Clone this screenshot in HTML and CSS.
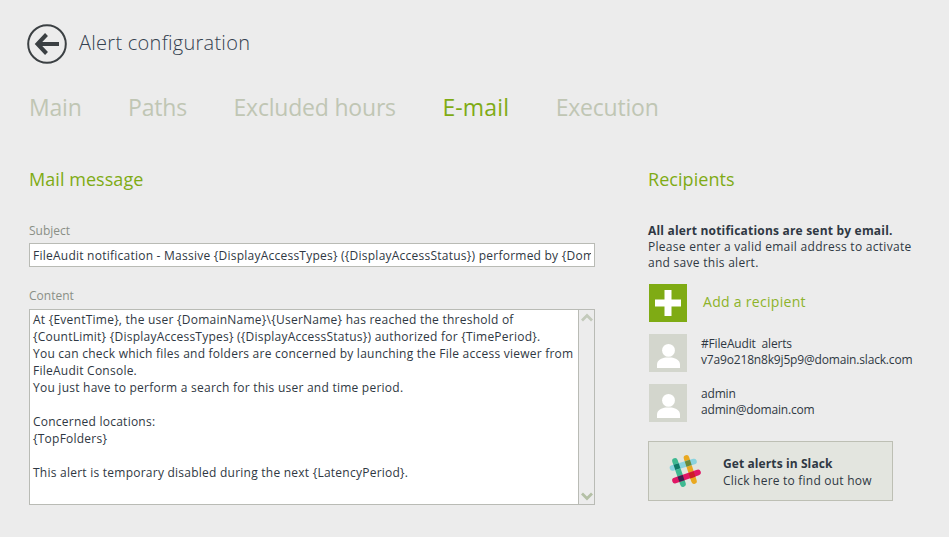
FILE: index.html
```html
<!DOCTYPE html>
<html lang="en">
<head>
  <meta charset="UTF-8">
  <meta name="viewport" content="width=device-width, initial-scale=1.0">
  <title>Alert configuration</title>
  <link rel="stylesheet" href="styles.css">
</head>
<body>
  <header class="page-header">
    <svg class="back-icon" width="40" height="40" viewBox="0 0 40 40">
      <circle cx="20" cy="20" r="18.8" fill="none" stroke="#3b4043" stroke-width="2"/>
      <path d="M19.5 10.5 L10.5 20 L19.5 29.5 M11 20 H32" fill="none" stroke="#3b4043" stroke-width="4"/>
    </svg>
    <h1>Alert configuration</h1>
  </header>

  <nav class="tabs">
    <a class="tab">Main</a>
    <a class="tab">Paths</a>
    <a class="tab">Excluded hours</a>
    <a class="tab active">E-mail</a>
    <a class="tab">Execution</a>
  </nav>

  <main class="columns">
    <section class="message">
      <h2>Mail message</h2>
      <label class="field-label subject-label" for="subject">Subject</label>
      <input class="subject-input" type="text" id="subject" value="FileAudit notification - Massive {DisplayAccessTypes} ({DisplayAccessStatus}) performed by {DomainName}\{UserName}">
      <div class="field-label content-label">Content</div>
      <div class="content-box">
        <div class="content-text">At {EventTime}, the user {DomainName}\{UserName} has reached the threshold of
{CountLimit} {DisplayAccessTypes} ({DisplayAccessStatus}) authorized for {TimePeriod}.
You can check which files and folders are concerned by launching the File access viewer from
FileAudit Console.
You just have to perform a search for this user and time period.

Concerned locations:
{TopFolders}

This alert is temporary disabled during the next {LatencyPeriod}.</div>
        <div class="scrollbar">
          <svg width="14" height="9" viewBox="0 0 14 9"><path d="M2 7.5 L7 2.5 L12 7.5" fill="none" stroke="#c3cabb" stroke-width="2.8"/></svg>
          <svg width="14" height="9" viewBox="0 0 14 9"><path d="M2 1.5 L7 6.5 L12 1.5" fill="none" stroke="#b4c0a6" stroke-width="2.8"/></svg>
        </div>
      </div>
    </section>

    <aside class="recipients">
      <h2>Recipients</h2>
      <p class="notice"><strong class="notice-title">All alert notifications are sent by email.</strong><br>Please enter a valid email address to activate<br>and save this alert.</p>

      <div class="add-row">
        <div class="add-button">
          <svg width="26" height="26" viewBox="0 0 26 26"><path d="M13 0 V26 M0 13 H26" stroke="#fff" stroke-width="7"/></svg>
        </div>
        <span class="add-label">Add a recipient</span>
      </div>

      <div class="recipient">
        <div class="avatar">
          <svg width="23" height="24" viewBox="0 0 23 24"><circle cx="11.5" cy="6.4" r="6.4" fill="#fff"/><path d="M0 24 V20.5 C0 16 5 14 8.5 13.5 H14.5 C18 14 23 16 23 20.5 V24 Z" fill="#fff"/></svg>
        </div>
        <div class="recipient-text">#FileAudit&nbsp; alerts<br>v7a9o218n8k9j5p9@domain.slack.com</div>
      </div>
      <div class="recipient">
        <div class="avatar">
          <svg width="23" height="24" viewBox="0 0 23 24"><circle cx="11.5" cy="6.4" r="6.4" fill="#fff"/><path d="M0 24 V20.5 C0 16 5 14 8.5 13.5 H14.5 C18 14 23 16 23 20.5 V24 Z" fill="#fff"/></svg>
        </div>
        <div class="recipient-text">admin<br>admin@domain.com</div>
      </div>

      <a class="slack-box">
        <svg class="slack-logo" width="34" height="34" viewBox="0 0 34 34">
          <g fill="none" stroke-width="5.6" stroke-linecap="round">
            <path d="M6 7 L14 30" stroke="#3eb991"/>
            <path d="M17.5 4 L25 27" stroke="#e9a820"/>
            <path d="M3.5 14 L25 7.5" stroke="#89d3df"/>
            <path d="M6 26.5 L29 18.5" stroke="#e01765"/>
          </g>
          <path d="M4.55 10.85 L9.75 9.15 L11.45 14.35 L6.25 16.05 Z" fill="#0f7a66"/>
          <path d="M15.75 7.45 L20.95 5.75 L22.65 10.95 L17.45 12.65 Z" fill="#6b8a3a"/>
          <path d="M19.55 19.25 L24.75 17.55 L26.45 22.75 L21.25 24.45 Z" fill="#cc1f27"/>
          <path d="M8.55 22.65 L13.75 20.95 L15.45 26.15 L10.25 27.85 Z" fill="#3a2350"/>
        </svg>
        <span class="slack-text"><strong class="slack-title">Get alerts in Slack</strong><br>Click here to find out how</span>
      </a>
    </aside>
  </main>
</body>
</html>
```

FILE: styles.css
```css
html, body {
  height: 100%;
}

body {
  margin: 0;
  padding: 24px 0 0 29px;
  box-sizing: border-box;
  overflow: hidden;
  background-color: #ececec;
  color: #2f3843;
  font-family: "Open Sans", sans-serif;
  font-size: 12px;
}

.page-header {
  display: flex;
  align-items: center;
  gap: 12px;
  margin-left: -2px;
}

.back-icon {
  flex: none;
}

h1 {
  margin: 0;
  padding-bottom: 3px;
  font-size: 20px;
  font-weight: 300;
  letter-spacing: 0.27px;
  color: #34414f;
}

.tabs {
  display: flex;
  gap: 46.5px;
  margin-top: 25px;
}

.tab {
  font-size: 23px;
  line-height: 36px;
  font-weight: 400;
  letter-spacing: -0.2px;
  color: #c0c6b4;
}

.tab.active {
  letter-spacing: 0.15px;
  color: #7fab14;
}

.columns {
  display: flex;
  margin-top: 42px;
}

h2 {
  margin: 0;
  font-size: 18px;
  line-height: 24px;
  font-weight: 400;
  letter-spacing: 0.05px;
  color: #7fab14;
}

.message {
  width: 566px;
  margin-right: 53px;
}

.field-label {
  display: block;
  color: #8a8f86;
  line-height: 16px;
}

.subject-label {
  margin-top: 32px;
}

.subject-input {
  display: block;
  width: 100%;
  height: 24px;
  margin-top: 4px;
  padding: 0 3px;
  box-sizing: border-box;
  border: 1px solid #b9bbb5;
  background: #fff;
  color: #2f3843;
  font-family: inherit;
  font-size: 12px;
  letter-spacing: 0.24px;
  outline: none;
}

.content-label {
  margin-top: 21px;
}

.content-box {
  display: flex;
  height: 196px;
  margin-top: 5px;
  box-sizing: border-box;
  border: 1px solid #b9bbb5;
  background: #fff;
}

.content-text {
  flex: 1;
  padding: 1px 3px 0;
  line-height: 17px;
  letter-spacing: 0.24px;
  white-space: pre-wrap;
}

.scrollbar {
  display: flex;
  flex-direction: column;
  justify-content: space-between;
  align-items: center;
  flex: none;
  width: 15px;
  padding: 3px 0 3px;
  border-left: 1px solid #b9bbb5;
  background-color: #ececec;
}

.recipients {
  width: 280px;
}

.notice {
  margin: 32px 0 0;
  line-height: 16px;
  letter-spacing: 0.28px;
}

.notice-title {
  letter-spacing: 0.2px;
}

.add-row {
  display: flex;
  align-items: center;
  gap: 16px;
  margin: 13px 0 0 1px;
}

.add-button {
  display: flex;
  align-items: center;
  justify-content: center;
  width: 38px;
  height: 38px;
  background-color: #7fab14;
}

.add-label {
  padding-bottom: 3px;
  font-size: 14px;
  letter-spacing: 0.3px;
  color: #8db32a;
}

.recipient {
  display: flex;
  align-items: center;
  gap: 14px;
  margin: 12px 0 0 1px;
}

.avatar {
  display: flex;
  align-items: flex-end;
  justify-content: center;
  width: 38px;
  height: 38px;
  padding-bottom: 4px;
  box-sizing: border-box;
  background-color: #d3d6cd;
}

.recipient-text {
  padding-bottom: 2px;
  line-height: 16px;
  letter-spacing: -0.17px;
}

.slack-box {
  display: flex;
  align-items: center;
  gap: 20px;
  width: 245px;
  height: 60px;
  margin-top: 19px;
  padding-left: 20px;
  box-sizing: border-box;
  border: 1px solid #bdbfb4;
  background-color: #e3e5df;
}

.slack-text {
  padding-top: 1px;
  line-height: 17px;
  letter-spacing: 0.22px;
}

.slack-title {
  letter-spacing: 0.1px;
}
```
